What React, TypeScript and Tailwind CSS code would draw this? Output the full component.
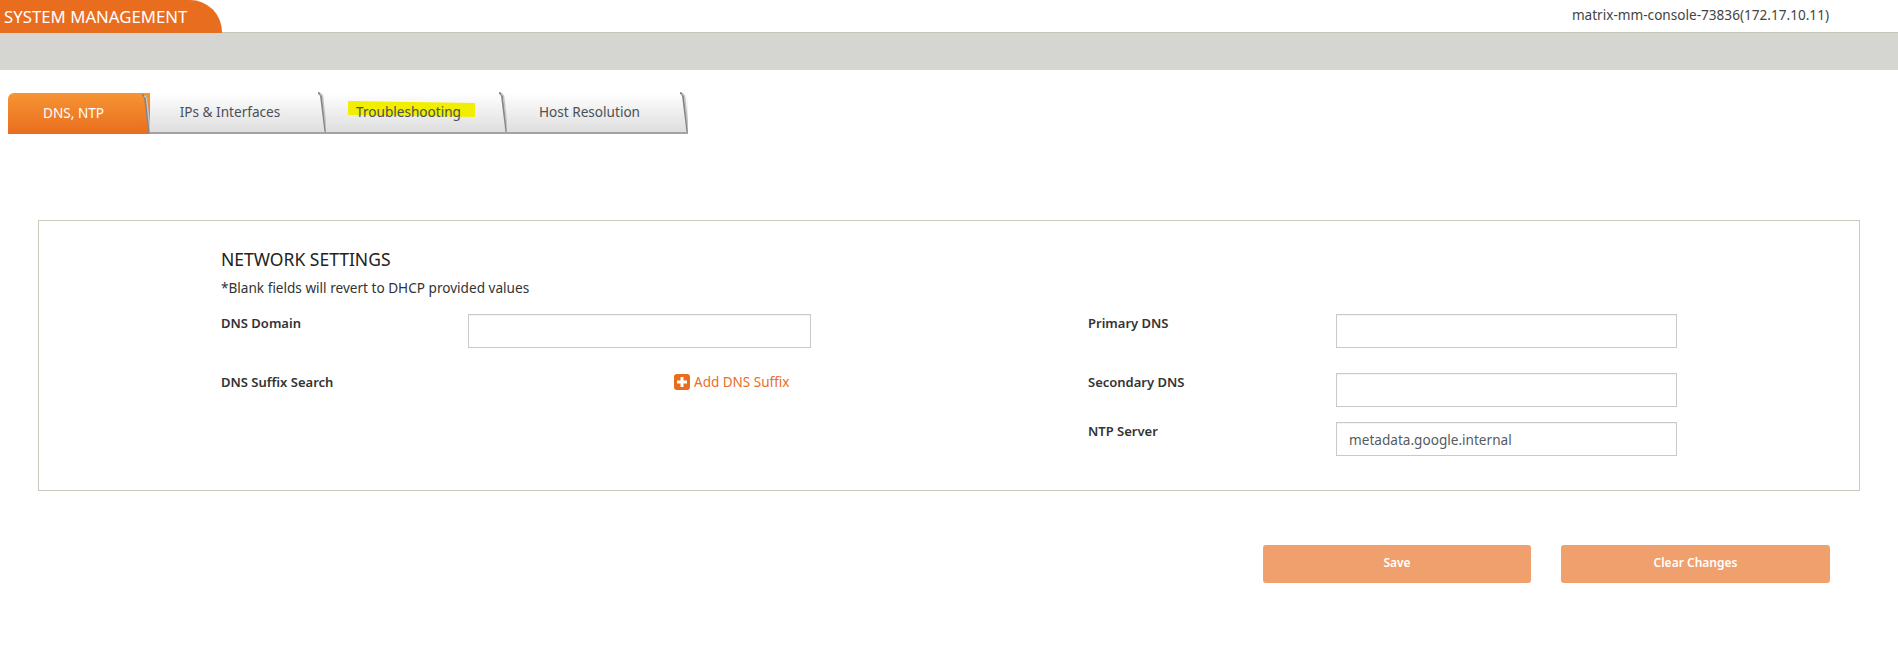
const font = "font-['Noto_Sans','Open_Sans',sans-serif]"

function TabEdge({ active }: { active?: boolean }) {
  return (
    <svg className="absolute right-0 bottom-0" width="12" height="40" viewBox="0 0 12 40">
      {active ? <path d="M0 0 H3 Q6 0 7 4 L11 40 H0 Z" fill="url(#activeTab)" /> : null}
      <path d="M4 1 Q6 1 7 4 L11.5 40" fill="none" stroke="#858585" strokeWidth="2" />
      <path d="M6 2 Q7.5 2 8.5 4 L12.5 40" fill="none" stroke="#c4c4c4" strokeWidth="1.5" />
    </svg>
  )
}

function Tab({
  label,
  width,
  active,
  highlight,
}: {
  label: string
  width: string
  active?: boolean
  highlight?: boolean
}) {
  return (
    <div
      className={`relative flex h-[41px] items-center justify-center text-[13.6px] ${width} ${
        active
          ? "rounded-tl-[6px] bg-gradient-to-b from-[#f69433] to-[#e96d1f] pr-[11px] text-white"
          : "border-b-2 border-[#a3a3a3] bg-gradient-to-b from-white to-[#dedede] pr-4 text-[#4a5058]"
      }`}
    >
      <span className="relative">
        {highlight ? (
          <span className="absolute top-0 -right-[14px] -left-[8px] h-[14px] rotate-[1deg] bg-[#f1ee00]" />
        ) : null}
        <span className="relative">{label}</span>
      </span>
      <TabEdge active={active} />
    </div>
  )
}

function Field({ value }: { value?: string }) {
  return (
    <input
      readOnly
      value={value ?? ""}
      className="h-[34px] w-full border border-[#c9c9c9] bg-white px-[12px] text-[13.6px] text-[#555b62] shadow-[inset_0_1px_1px_rgba(0,0,0,0.05)] outline-none"
    />
  )
}

function Label({ children }: { children: string }) {
  return <div className="text-[13px] font-semibold text-[#333]">{children}</div>
}

export default function App() {
  return (
    <div className={`h-[661px] w-[1898px] overflow-hidden bg-white ${font}`}>
      <svg width="0" height="0" className="absolute">
        <defs>
          <linearGradient id="activeTab" x1="0" y1="0" x2="0" y2="1">
            <stop offset="0" stopColor="#f69433" />
            <stop offset="1" stopColor="#e96d1f" />
          </linearGradient>
        </defs>
      </svg>

      <div className="flex h-[32px] items-start justify-between">
        <div className="flex h-[33px] w-[222px] items-center rounded-tr-[32px] bg-[#e96d1f] pl-1 text-[16.8px] text-white">
          SYSTEM MANAGEMENT
        </div>
        <div className="mt-[5px] mr-[69px] text-[13.6px] leading-[20px] text-[#444]">
          matrix-mm-console-73836(172.17.10.11)
        </div>
      </div>
      <div className="h-[38px] border-t border-[#c4c5b8] bg-[#d5d6d1]" />

      <div className="mt-[23px] ml-2 flex">
        <Tab label="DNS, NTP" width="w-[142px]" active />
        <Tab label="IPs & Interfaces" width="w-[176px]" />
        <Tab label="Troubleshooting" width="w-[181px]" highlight />
        <Tab label="Host Resolution" width="w-[181px]" />
      </div>

      <div className="mt-[86px] ml-[38px] h-[271px] w-[1822px] border border-[#c9cabd] pt-[27px] pl-[182px]">
        <div className="text-[17.5px] leading-[22px] text-[#222]">NETWORK SETTINGS</div>
        <div className="mt-[8px] text-[13.6px] leading-[20px] text-[#333]">
          *Blank fields will revert to DHCP provided values
        </div>
        <div className="mt-[16px] grid grid-cols-[247px_343px_277px_248px_341px] grid-rows-[34px_34px_34px] gap-y-[25px]">
          <Label>DNS Domain</Label>
          <Field />
          <div />
          <Label>Primary DNS</Label>
          <Field />

          <Label>DNS Suffix Search</Label>
          <div className="flex items-start pl-[206px] text-[13.5px] leading-[18px] text-[#e96d1f]">
            <svg width="16" height="16" viewBox="0 0 16 16" className="mr-1 mt-[1px] shrink-0">
              <rect width="16" height="16" rx="3" fill="#e96d1f" />
              <path d="M8 3v10M3 8h10" stroke="#fff" strokeWidth="3" />
            </svg>
            <span>Add DNS Suffix</span>
          </div>
          <div />
          <Label>Secondary DNS</Label>
          <Field />

          <div className="col-span-3" />
          <div className="-mt-[10px]">
            <Label>NTP Server</Label>
          </div>
          <div className="-mt-[10px]">
            <Field value="metadata.google.internal" />
          </div>
        </div>
      </div>

      <div className="mt-[54px] ml-[1263px] flex gap-[30px]">
        <button className="h-[38px] w-[268px] rounded-[3px] bg-[#f0a06c] pb-[2px] text-[12px] font-semibold text-white">
          Save
        </button>
        <button className="h-[38px] w-[269px] rounded-[3px] bg-[#f0a06c] pb-[2px] text-[12px] font-semibold text-white">
          Clear Changes
        </button>
      </div>
    </div>
  )
}
